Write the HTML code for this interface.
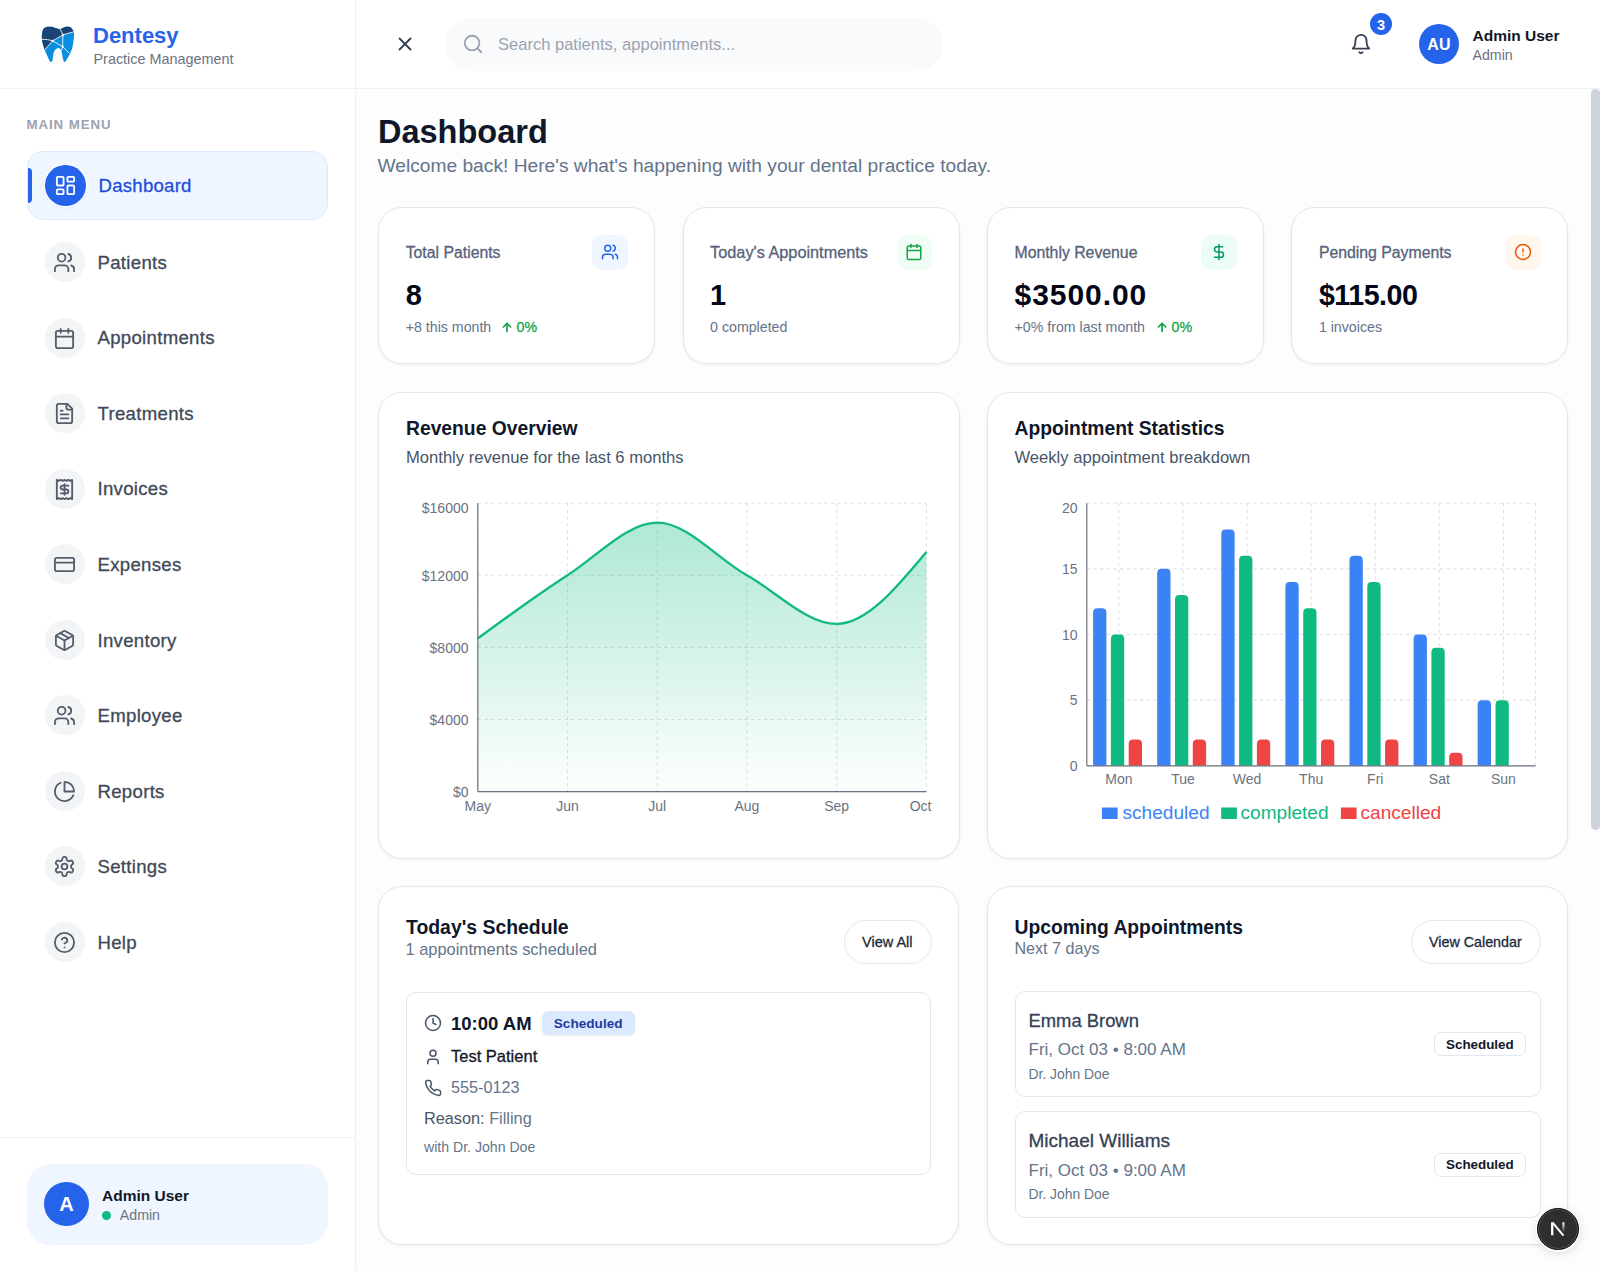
<!DOCTYPE html><html><head><meta charset="utf-8"><title>Dentesy Dashboard</title><style>
html,body{margin:0;padding:0;}
body{width:1600px;height:1271px;overflow:hidden;position:relative;background:#fdfdfe;font-family:"Liberation Sans", sans-serif;}
.t{position:absolute;white-space:nowrap;line-height:1;}
.b{position:absolute;box-sizing:border-box;}
.i{position:absolute;overflow:visible;}
svg text{font-family:"Liberation Sans", sans-serif;}
</style></head><body>
<div class="b" style="left:0.00px;top:0.00px;width:356.00px;height:1271.00px;background:#ffffff;border-right:1px solid #eef0f3;"></div>
<div class="b" style="left:0.00px;top:88.00px;width:355.00px;height:1.00px;background:#eef0f3;"></div>
<div class="b" style="left:0.00px;top:1137.00px;width:355.00px;height:1.00px;background:#eef0f3;"></div>
<svg class="i" style="left:38px;top:22px;width:40px;height:44px" viewBox="0 0 40 44">
<defs><clipPath id="tc"><path d="M6.93 28.40 C7.85 30.59 10.42 36.51 11.43 38.44 C12.44 40.38 12.47 40.03 12.99 40.00 C13.51 39.97 14.17 39.45 14.55 38.27 C14.92 37.09 14.89 34.55 15.24 32.90 C15.58 31.26 15.87 29.52 16.62 28.40 C17.37 27.27 18.76 26.32 19.74 26.15 C20.72 25.97 21.82 26.52 22.51 27.36 C23.20 28.20 23.43 29.38 23.90 31.17 C24.36 32.96 24.82 36.64 25.28 38.10 C25.74 39.55 26.15 39.90 26.67 39.90 C27.19 39.90 27.47 39.55 28.40 38.10 C29.32 36.64 31.17 33.48 32.21 31.17 C33.25 28.86 34.00 27.13 34.63 24.24 C35.27 21.36 35.84 16.28 36.02 13.85 C36.19 11.43 36.13 11.02 35.67 9.70 C35.21 8.37 34.17 6.70 33.25 5.89 C32.32 5.08 31.28 4.96 30.13 4.85 C28.98 4.73 27.65 4.82 26.32 5.19 C24.99 5.57 23.55 6.93 22.16 7.10 C20.78 7.27 19.39 6.61 18.01 6.23 C16.62 5.86 15.24 5.08 13.85 4.85 C12.47 4.62 11.08 4.50 9.70 4.85 C8.31 5.19 6.46 5.83 5.54 6.93 C4.62 8.02 4.44 9.99 4.16 11.43 C3.87 12.87 3.75 14.03 3.81 15.58 C3.87 17.14 4.16 19.16 4.50 20.78 C4.85 22.40 5.48 24.01 5.89 25.28 C6.29 26.55 6.00 26.20 6.93 28.40 Z"/></clipPath></defs>
<g clip-path="url(#tc)">
<rect x="0" y="0" width="40" height="44" fill="#0a8fdf"/>
<path d="M0 0 H40 V9.4 L36 9.5 L24.9 12.9 L14.6 18.9 L6.5 28 L0 30 Z" fill="#1c4474"/>
<g stroke="#ffffff" stroke-width="0.9" fill="none" opacity="0.95">
<path d="M6.5 28.2 L14.6 18.9 L24.9 12.9 L36.5 9.5"/>
<path d="M3 17.3 C8 17.3 11.5 17.8 14.6 18.9"/>
<path d="M24.9 12.9 L22.2 7.2"/>
<path d="M14.6 18.9 L24.6 24.5 L31.5 31.5"/>
<path d="M24.9 12.9 L24.6 24.5 L23.5 28.5"/>
</g>
<circle cx="14.6" cy="18.9" r="1.1" fill="#fff"/><circle cx="24.9" cy="12.9" r="1.1" fill="#fff"/><circle cx="24.6" cy="24.5" r="1.1" fill="#fff"/>
</g></svg>
<svg class="i" style="left:0;top:0;width:1px;height:1px"><text x="93.00" y="43.20" font-size="22" font-weight="700" fill="#2563eb" text-anchor="start" style="">Dentesy</text></svg>
<svg class="i" style="left:0;top:0;width:1px;height:1px"><text x="93.50" y="64.30" font-size="14.4" font-weight="400" fill="#6b7280" text-anchor="start" style="">Practice Management</text></svg>
<svg class="i" style="left:0;top:0;width:1px;height:1px"><text x="26.50" y="128.75" font-size="13.3" font-weight="700" fill="#9ca3af" text-anchor="start" style="letter-spacing:0.9px;">MAIN MENU</text></svg>
<div class="b" style="left:27.00px;top:151.00px;width:301.00px;height:69.00px;background:#eff6ff;border:1px solid #dbeafe;border-radius:16px;"></div>
<div class="b" style="left:27.50px;top:168.00px;width:4.50px;height:35.00px;background:#2563eb;border-radius:0 4px 4px 0;"></div>
<div class="b" style="left:45.30px;top:165.00px;width:40.50px;height:40.50px;background:#2563eb;border-radius:50%;box-shadow:0 0 0 1.5px #ffffff, 0 1px 3px rgba(37,99,235,0.25);"></div>
<svg class="i" style="left:54.40px;top:174.10px;width:23px;height:23px;" viewBox="0 0 24 24" fill="none" stroke="#ffffff" stroke-width="1.9" stroke-linecap="round" stroke-linejoin="round"><rect width="7" height="9" x="3" y="3" rx="1"/><rect width="7" height="5" x="14" y="3" rx="1"/><rect width="7" height="9" x="14" y="12" rx="1"/><rect width="7" height="5" x="3" y="16" rx="1"/></svg>
<svg class="i" style="left:0;top:0;width:1px;height:1px"><text x="98.50" y="192.20" font-size="18.6" font-weight="400" fill="#1d4ed8" text-anchor="start" style="stroke:#1d4ed8;stroke-width:0.3px;letter-spacing:0.25px;">Dashboard</text></svg>
<div class="b" style="left:44.60px;top:242.00px;width:40.00px;height:40.00px;background:#f3f4f6;border-radius:50%;"></div>
<svg class="i" style="left:53.40px;top:251.00px;width:23px;height:23px;" viewBox="0 0 24 24" fill="none" stroke="#535d6c" stroke-width="1.9" stroke-linecap="round" stroke-linejoin="round"><path d="M16 21v-2a4 4 0 0 0-4-4H6a4 4 0 0 0-4 4v2"/><circle cx="9" cy="7" r="4"/><path d="M22 21v-2a4 4 0 0 0-3-3.87"/><path d="M16 3.13a4 4 0 0 1 0 7.75"/></svg>
<svg class="i" style="left:0;top:0;width:1px;height:1px"><text x="97.50" y="268.70" font-size="18.6" font-weight="400" fill="#3f4958" text-anchor="start" style="stroke:#3f4958;stroke-width:0.3px;letter-spacing:0.3px;">Patients</text></svg>
<div class="b" style="left:44.60px;top:317.56px;width:40.00px;height:40.00px;background:#f3f4f6;border-radius:50%;"></div>
<svg class="i" style="left:53.40px;top:326.56px;width:23px;height:23px;" viewBox="0 0 24 24" fill="none" stroke="#535d6c" stroke-width="1.9" stroke-linecap="round" stroke-linejoin="round"><path d="M8 2v4"/><path d="M16 2v4"/><rect width="18" height="18" x="3" y="4" rx="2"/><path d="M3 10h18"/></svg>
<svg class="i" style="left:0;top:0;width:1px;height:1px"><text x="97.50" y="344.26" font-size="18.6" font-weight="400" fill="#3f4958" text-anchor="start" style="stroke:#3f4958;stroke-width:0.3px;letter-spacing:0.3px;">Appointments</text></svg>
<div class="b" style="left:44.60px;top:393.12px;width:40.00px;height:40.00px;background:#f3f4f6;border-radius:50%;"></div>
<svg class="i" style="left:53.40px;top:402.12px;width:23px;height:23px;" viewBox="0 0 24 24" fill="none" stroke="#535d6c" stroke-width="1.9" stroke-linecap="round" stroke-linejoin="round"><path d="M15 2H6a2 2 0 0 0-2 2v16a2 2 0 0 0 2 2h12a2 2 0 0 0 2-2V7Z"/><path d="M14 2v4a2 2 0 0 0 2 2h4"/><path d="M10 9H8"/><path d="M16 13H8"/><path d="M16 17H8"/></svg>
<svg class="i" style="left:0;top:0;width:1px;height:1px"><text x="97.50" y="419.82" font-size="18.6" font-weight="400" fill="#3f4958" text-anchor="start" style="stroke:#3f4958;stroke-width:0.3px;letter-spacing:0.3px;">Treatments</text></svg>
<div class="b" style="left:44.60px;top:468.68px;width:40.00px;height:40.00px;background:#f3f4f6;border-radius:50%;"></div>
<svg class="i" style="left:53.40px;top:477.68px;width:23px;height:23px;" viewBox="0 0 24 24" fill="none" stroke="#535d6c" stroke-width="1.9" stroke-linecap="round" stroke-linejoin="round"><path d="M4 2v20l2-1 2 1 2-1 2 1 2-1 2 1 2-1 2 1V2l-2 1-2-1-2 1-2-1-2 1-2-1-2 1Z"/><path d="M16 8h-6a2 2 0 1 0 0 4h4a2 2 0 1 1 0 4H8"/><path d="M12 17.5v-11"/></svg>
<svg class="i" style="left:0;top:0;width:1px;height:1px"><text x="97.50" y="495.38" font-size="18.6" font-weight="400" fill="#3f4958" text-anchor="start" style="stroke:#3f4958;stroke-width:0.3px;letter-spacing:0.3px;">Invoices</text></svg>
<div class="b" style="left:44.60px;top:544.24px;width:40.00px;height:40.00px;background:#f3f4f6;border-radius:50%;"></div>
<svg class="i" style="left:53.40px;top:553.24px;width:23px;height:23px;" viewBox="0 0 24 24" fill="none" stroke="#535d6c" stroke-width="1.9" stroke-linecap="round" stroke-linejoin="round"><rect width="20" height="14" x="2" y="5" rx="2"/><line x1="2" x2="22" y1="10" y2="10"/></svg>
<svg class="i" style="left:0;top:0;width:1px;height:1px"><text x="97.50" y="570.94" font-size="18.6" font-weight="400" fill="#3f4958" text-anchor="start" style="stroke:#3f4958;stroke-width:0.3px;letter-spacing:0.3px;">Expenses</text></svg>
<div class="b" style="left:44.60px;top:619.80px;width:40.00px;height:40.00px;background:#f3f4f6;border-radius:50%;"></div>
<svg class="i" style="left:53.40px;top:628.80px;width:23px;height:23px;" viewBox="0 0 24 24" fill="none" stroke="#535d6c" stroke-width="1.9" stroke-linecap="round" stroke-linejoin="round"><path d="m7.5 4.27 9 5.15"/><path d="M21 8a2 2 0 0 0-1-1.73l-7-4a2 2 0 0 0-2 0l-7 4A2 2 0 0 0 3 8v8a2 2 0 0 0 1 1.73l7 4a2 2 0 0 0 2 0l7-4A2 2 0 0 0 21 16Z"/><path d="m3.3 7 8.7 5 8.7-5"/><path d="M12 22V12"/></svg>
<svg class="i" style="left:0;top:0;width:1px;height:1px"><text x="97.50" y="646.50" font-size="18.6" font-weight="400" fill="#3f4958" text-anchor="start" style="stroke:#3f4958;stroke-width:0.3px;letter-spacing:0.3px;">Inventory</text></svg>
<div class="b" style="left:44.60px;top:695.36px;width:40.00px;height:40.00px;background:#f3f4f6;border-radius:50%;"></div>
<svg class="i" style="left:53.40px;top:704.36px;width:23px;height:23px;" viewBox="0 0 24 24" fill="none" stroke="#535d6c" stroke-width="1.9" stroke-linecap="round" stroke-linejoin="round"><path d="M16 21v-2a4 4 0 0 0-4-4H6a4 4 0 0 0-4 4v2"/><circle cx="9" cy="7" r="4"/><path d="M22 21v-2a4 4 0 0 0-3-3.87"/><path d="M16 3.13a4 4 0 0 1 0 7.75"/></svg>
<svg class="i" style="left:0;top:0;width:1px;height:1px"><text x="97.50" y="722.06" font-size="18.6" font-weight="400" fill="#3f4958" text-anchor="start" style="stroke:#3f4958;stroke-width:0.3px;letter-spacing:0.3px;">Employee</text></svg>
<div class="b" style="left:44.60px;top:770.92px;width:40.00px;height:40.00px;background:#f3f4f6;border-radius:50%;"></div>
<svg class="i" style="left:53.40px;top:779.92px;width:23px;height:23px;" viewBox="0 0 24 24" fill="none" stroke="#535d6c" stroke-width="1.9" stroke-linecap="round" stroke-linejoin="round"><path d="M21.21 15.89A10 10 0 1 1 8 2.83"/><path d="M22 12A10 10 0 0 0 12 2v10z"/></svg>
<svg class="i" style="left:0;top:0;width:1px;height:1px"><text x="97.50" y="797.62" font-size="18.6" font-weight="400" fill="#3f4958" text-anchor="start" style="stroke:#3f4958;stroke-width:0.3px;letter-spacing:0.3px;">Reports</text></svg>
<div class="b" style="left:44.60px;top:846.48px;width:40.00px;height:40.00px;background:#f3f4f6;border-radius:50%;"></div>
<svg class="i" style="left:53.40px;top:855.48px;width:23px;height:23px;" viewBox="0 0 24 24" fill="none" stroke="#535d6c" stroke-width="1.9" stroke-linecap="round" stroke-linejoin="round"><path d="M12.22 2h-.44a2 2 0 0 0-2 2v.18a2 2 0 0 1-1 1.73l-.43.25a2 2 0 0 1-2 0l-.15-.08a2 2 0 0 0-2.73.73l-.22.38a2 2 0 0 0 .73 2.73l.15.1a2 2 0 0 1 1 1.72v.51a2 2 0 0 1-1 1.74l-.15.09a2 2 0 0 0-.73 2.73l.22.38a2 2 0 0 0 2.73.73l.15-.08a2 2 0 0 1 2 0l.43.25a2 2 0 0 1 1 1.73V20a2 2 0 0 0 2 2h.44a2 2 0 0 0 2-2v-.18a2 2 0 0 1 1-1.73l.43-.25a2 2 0 0 1 2 0l.15.08a2 2 0 0 0 2.73-.73l.22-.39a2 2 0 0 0-.73-2.73l-.15-.08a2 2 0 0 1-1-1.74v-.5a2 2 0 0 1 1-1.74l.15-.09a2 2 0 0 0 .73-2.73l-.22-.38a2 2 0 0 0-2.73-.73l-.15.08a2 2 0 0 1-2 0l-.43-.25a2 2 0 0 1-1-1.73V4a2 2 0 0 0-2-2z"/><circle cx="12" cy="12" r="3"/></svg>
<svg class="i" style="left:0;top:0;width:1px;height:1px"><text x="97.50" y="873.18" font-size="18.6" font-weight="400" fill="#3f4958" text-anchor="start" style="stroke:#3f4958;stroke-width:0.3px;letter-spacing:0.3px;">Settings</text></svg>
<div class="b" style="left:44.60px;top:922.04px;width:40.00px;height:40.00px;background:#f3f4f6;border-radius:50%;"></div>
<svg class="i" style="left:53.40px;top:931.04px;width:23px;height:23px;" viewBox="0 0 24 24" fill="none" stroke="#535d6c" stroke-width="1.9" stroke-linecap="round" stroke-linejoin="round"><circle cx="12" cy="12" r="10"/><path d="M9.09 9a3 3 0 0 1 5.83 1c0 2-3 3-3 3"/><path d="M12 17h.01"/></svg>
<svg class="i" style="left:0;top:0;width:1px;height:1px"><text x="97.50" y="948.74" font-size="18.6" font-weight="400" fill="#3f4958" text-anchor="start" style="stroke:#3f4958;stroke-width:0.3px;letter-spacing:0.3px;">Help</text></svg>
<div class="b" style="left:26.50px;top:1164.00px;width:301.50px;height:80.50px;background:#eff6ff;border-radius:24px;"></div>
<div class="b" style="left:44.40px;top:1182.00px;width:44.40px;height:44.40px;background:#2563eb;border-radius:50%;"></div>
<svg class="i" style="left:0;top:0;width:1px;height:1px"><text x="66.60" y="1211.30" font-size="20" font-weight="700" fill="#ffffff" text-anchor="middle" style="">A</text></svg>
<svg class="i" style="left:0;top:0;width:1px;height:1px"><text x="102.00" y="1201.00" font-size="15.5" font-weight="700" fill="#111827" text-anchor="start" style="">Admin User</text></svg>
<div class="b" style="left:102.00px;top:1211.00px;width:9.40px;height:9.40px;background:#10b981;border-radius:50%;"></div>
<svg class="i" style="left:0;top:0;width:1px;height:1px"><text x="119.80" y="1219.75" font-size="14.2" font-weight="400" fill="#6b7280" text-anchor="start" style="">Admin</text></svg>
<div class="b" style="left:356.00px;top:0.00px;width:1244.00px;height:89.00px;background:#ffffff;border-bottom:1px solid #eef0f3;"></div>
<svg class="i" style="left:393.50px;top:33.40px;width:22px;height:22px;" viewBox="0 0 24 24" fill="none" stroke="#334155" stroke-width="2" stroke-linecap="round" stroke-linejoin="round"><path d="M18 6 6 18"/><path d="m6 6 12 12"/></svg>
<div class="b" style="left:444.50px;top:17.80px;width:498.00px;height:53.20px;background:#f8fafc;border-radius:27px;"></div>
<svg class="i" style="left:462.30px;top:33.30px;width:22px;height:22px;" viewBox="0 0 24 24" fill="none" stroke="#9ca3af" stroke-width="2" stroke-linecap="round" stroke-linejoin="round"><circle cx="11" cy="11" r="8"/><path d="m21 21-4.3-4.3"/></svg>
<svg class="i" style="left:0;top:0;width:1px;height:1px"><text x="498.00" y="50.00" font-size="16.55" font-weight="400" fill="#9ca3af" text-anchor="start" style="">Search patients, appointments...</text></svg>
<svg class="i" style="left:1350.10px;top:33.20px;width:22px;height:22px;" viewBox="0 0 24 24" fill="none" stroke="#374151" stroke-width="2" stroke-linecap="round" stroke-linejoin="round"><path d="M6 8a6 6 0 0 1 12 0c0 7 3 9 3 9H3s3-2 3-9"/><path d="M10.3 21a1.94 1.94 0 0 0 3.4 0"/></svg>
<div class="b" style="left:1370.00px;top:13.10px;width:22.20px;height:22.20px;background:#2563eb;border-radius:50%;"></div>
<svg class="i" style="left:0;top:0;width:1px;height:1px"><text x="1381.10" y="29.60" font-size="14.5" font-weight="700" fill="#ffffff" text-anchor="middle" style="">3</text></svg>
<div class="b" style="left:1418.90px;top:24.20px;width:40.00px;height:40.00px;background:#2563eb;border-radius:50%;"></div>
<svg class="i" style="left:0;top:0;width:1px;height:1px"><text x="1438.90" y="49.80" font-size="16" font-weight="700" fill="#ffffff" text-anchor="middle" style="">AU</text></svg>
<svg class="i" style="left:0;top:0;width:1px;height:1px"><text x="1472.50" y="41.00" font-size="15.5" font-weight="700" fill="#111827" text-anchor="start" style="">Admin User</text></svg>
<svg class="i" style="left:0;top:0;width:1px;height:1px"><text x="1472.50" y="59.75" font-size="14.2" font-weight="400" fill="#6b7280" text-anchor="start" style="">Admin</text></svg>
<svg class="i" style="left:0;top:0;width:1px;height:1px"><text x="378.00" y="142.90" font-size="32.5" font-weight="700" fill="#0f172a" text-anchor="start" style="">Dashboard</text></svg>
<svg class="i" style="left:0;top:0;width:1px;height:1px"><text x="377.50" y="171.90" font-size="19.2" font-weight="400" fill="#64748b" text-anchor="start" style="">Welcome back! Here's what's happening with your dental practice today.</text></svg>
<div class="b" style="left:378.20px;top:207.00px;width:277.00px;height:156.50px;background:#ffffff;border:1.3px solid #e2e8f0;border-radius:24px;box-shadow:0 1px 3px rgba(15,23,42,0.06);"></div>
<svg class="i" style="left:0;top:0;width:1px;height:1px"><text x="405.70" y="257.80" font-size="15.8" font-weight="400" fill="#56637a" text-anchor="start" style="stroke:#56637a;stroke-width:0.3px;">Total Patients</text></svg>
<div class="b" style="left:592.20px;top:234.50px;width:35.50px;height:35.50px;background:#eff6ff;border-radius:10px;"></div>
<svg class="i" style="left:600.95px;top:243.20px;width:18px;height:18px;" viewBox="0 0 24 24" fill="none" stroke="#2563eb" stroke-width="2" stroke-linecap="round" stroke-linejoin="round"><path d="M16 21v-2a4 4 0 0 0-4-4H6a4 4 0 0 0-4 4v2"/><circle cx="9" cy="7" r="4"/><path d="M22 21v-2a4 4 0 0 0-3-3.87"/><path d="M16 3.13a4 4 0 0 1 0 7.75"/></svg>
<svg class="i" style="left:0;top:0;width:1px;height:1px"><text x="405.70" y="305.40" font-size="29" font-weight="700" fill="#020617" text-anchor="start" style="letter-spacing:0px;">8</text></svg>
<svg class="i" style="left:0;top:0;width:1px;height:1px"><text x="405.70" y="332.20" font-size="14.2" font-weight="400" fill="#64748b" text-anchor="start" style="">+8 this month</text></svg>
<div class="b" style="left:682.60px;top:207.00px;width:277.00px;height:156.50px;background:#ffffff;border:1.3px solid #e2e8f0;border-radius:24px;box-shadow:0 1px 3px rgba(15,23,42,0.06);"></div>
<svg class="i" style="left:0;top:0;width:1px;height:1px"><text x="710.10" y="257.80" font-size="16.3" font-weight="400" fill="#56637a" text-anchor="start" style="stroke:#56637a;stroke-width:0.3px;">Today's Appointments</text></svg>
<div class="b" style="left:896.60px;top:234.50px;width:35.50px;height:35.50px;background:#f0fdf4;border-radius:10px;"></div>
<svg class="i" style="left:905.35px;top:243.20px;width:18px;height:18px;" viewBox="0 0 24 24" fill="none" stroke="#16a34a" stroke-width="2" stroke-linecap="round" stroke-linejoin="round"><path d="M8 2v4"/><path d="M16 2v4"/><rect width="18" height="18" x="3" y="4" rx="2"/><path d="M3 10h18"/></svg>
<svg class="i" style="left:0;top:0;width:1px;height:1px"><text x="710.10" y="305.40" font-size="29" font-weight="700" fill="#020617" text-anchor="start" style="letter-spacing:0px;">1</text></svg>
<svg class="i" style="left:0;top:0;width:1px;height:1px"><text x="710.10" y="332.20" font-size="14.2" font-weight="400" fill="#64748b" text-anchor="start" style="">0 completed</text></svg>
<div class="b" style="left:987.00px;top:207.00px;width:277.00px;height:156.50px;background:#ffffff;border:1.3px solid #e2e8f0;border-radius:24px;box-shadow:0 1px 3px rgba(15,23,42,0.06);"></div>
<svg class="i" style="left:0;top:0;width:1px;height:1px"><text x="1014.50" y="257.80" font-size="15.8" font-weight="400" fill="#56637a" text-anchor="start" style="stroke:#56637a;stroke-width:0.3px;">Monthly Revenue</text></svg>
<div class="b" style="left:1201.00px;top:234.50px;width:35.50px;height:35.50px;background:#ecfdf5;border-radius:10px;"></div>
<svg class="i" style="left:1209.75px;top:243.20px;width:18px;height:18px;" viewBox="0 0 24 24" fill="none" stroke="#059669" stroke-width="2" stroke-linecap="round" stroke-linejoin="round"><line x1="12" x2="12" y1="2" y2="22"/><path d="M17 5H9.5a3.5 3.5 0 0 0 0 7h5a3.5 3.5 0 0 1 0 7H6"/></svg>
<svg class="i" style="left:0;top:0;width:1px;height:1px"><text x="1014.50" y="305.40" font-size="30" font-weight="700" fill="#020617" text-anchor="start" style="letter-spacing:0.95px;">$3500.00</text></svg>
<svg class="i" style="left:0;top:0;width:1px;height:1px"><text x="1014.50" y="332.20" font-size="14.2" font-weight="400" fill="#64748b" text-anchor="start" style="">+0% from last month</text></svg>
<div class="b" style="left:1291.40px;top:207.00px;width:277.00px;height:156.50px;background:#ffffff;border:1.3px solid #e2e8f0;border-radius:24px;box-shadow:0 1px 3px rgba(15,23,42,0.06);"></div>
<svg class="i" style="left:0;top:0;width:1px;height:1px"><text x="1318.90" y="257.80" font-size="15.8" font-weight="400" fill="#56637a" text-anchor="start" style="stroke:#56637a;stroke-width:0.3px;">Pending Payments</text></svg>
<div class="b" style="left:1505.40px;top:234.50px;width:35.50px;height:35.50px;background:#fff7ed;border-radius:10px;"></div>
<svg class="i" style="left:1514.15px;top:243.20px;width:18px;height:18px;" viewBox="0 0 24 24" fill="none" stroke="#ea580c" stroke-width="2" stroke-linecap="round" stroke-linejoin="round"><circle cx="12" cy="12" r="10"/><line x1="12" x2="12" y1="8" y2="12"/><line x1="12" x2="12.01" y1="16" y2="16"/></svg>
<svg class="i" style="left:0;top:0;width:1px;height:1px"><text x="1318.90" y="305.40" font-size="28.6" font-weight="700" fill="#020617" text-anchor="start" style="letter-spacing:-0.45px;">$115.00</text></svg>
<svg class="i" style="left:0;top:0;width:1px;height:1px"><text x="1318.90" y="332.20" font-size="14.2" font-weight="400" fill="#64748b" text-anchor="start" style="">1 invoices</text></svg>
<svg class="i" style="left:0;top:0;width:1px;height:1px"><path d="M507.0,331.4V323.4M503.4,327L507.0,323.3L510.6,327" fill="none" stroke="#16a34a" stroke-width="1.7" stroke-linecap="round" stroke-linejoin="round"/></svg>
<svg class="i" style="left:0;top:0;width:1px;height:1px"><text x="516.50" y="332.20" font-size="14.2" font-weight="400" fill="#16a34a" text-anchor="start" style="stroke:#16a34a;stroke-width:0.3px;">0%</text></svg>
<svg class="i" style="left:0;top:0;width:1px;height:1px"><path d="M1162.1,331.4V323.4M1158.5,327L1162.1,323.3L1165.6999999999998,327" fill="none" stroke="#16a34a" stroke-width="1.7" stroke-linecap="round" stroke-linejoin="round"/></svg>
<svg class="i" style="left:0;top:0;width:1px;height:1px"><text x="1171.60" y="332.20" font-size="14.2" font-weight="400" fill="#16a34a" text-anchor="start" style="stroke:#16a34a;stroke-width:0.3px;">0%</text></svg>
<div class="b" style="left:378.20px;top:391.60px;width:581.40px;height:467.20px;background:#ffffff;border:1.3px solid #e2e8f0;border-radius:24px;box-shadow:0 1px 3px rgba(15,23,42,0.06);"></div>
<div class="b" style="left:987.00px;top:391.60px;width:581.20px;height:467.20px;background:#ffffff;border:1.3px solid #e2e8f0;border-radius:24px;box-shadow:0 1px 3px rgba(15,23,42,0.06);"></div>
<svg class="i" style="left:0;top:0;width:1px;height:1px"><text x="406.00" y="435.10" font-size="19.3" font-weight="700" fill="#0f172a" text-anchor="start" style="">Revenue Overview</text></svg>
<svg class="i" style="left:0;top:0;width:1px;height:1px"><text x="406.00" y="462.70" font-size="16.6" font-weight="400" fill="#475569" text-anchor="start" style="">Monthly revenue for the last 6 months</text></svg>
<svg class="i" style="left:0;top:0;width:1px;height:1px"><text x="1014.50" y="435.10" font-size="19.3" font-weight="700" fill="#0f172a" text-anchor="start" style="">Appointment Statistics</text></svg>
<svg class="i" style="left:0;top:0;width:1px;height:1px"><text x="1014.50" y="462.70" font-size="16.6" font-weight="400" fill="#475569" text-anchor="start" style="">Weekly appointment breakdown</text></svg>
<svg class="i" style="left:0;top:0;width:1600px;height:1271px" viewBox="0 0 1600 1271"><defs><linearGradient id="rg" x1="0" y1="0" x2="0" y2="1"><stop offset="5%" stop-color="#10b981" stop-opacity="0.32"/><stop offset="95%" stop-color="#10b981" stop-opacity="0.02"/></linearGradient></defs><line x1="477.8" x2="926.4" y1="503.20" y2="503.20" stroke="#dde1e7" stroke-width="1.1" stroke-dasharray="3.33 3.33"/><line x1="477.8" x2="926.4" y1="575.30" y2="575.30" stroke="#dde1e7" stroke-width="1.1" stroke-dasharray="3.33 3.33"/><line x1="477.8" x2="926.4" y1="647.40" y2="647.40" stroke="#dde1e7" stroke-width="1.1" stroke-dasharray="3.33 3.33"/><line x1="477.8" x2="926.4" y1="719.50" y2="719.50" stroke="#dde1e7" stroke-width="1.1" stroke-dasharray="3.33 3.33"/><line x1="477.8" x2="926.4" y1="791.60" y2="791.60" stroke="#dde1e7" stroke-width="1.1" stroke-dasharray="3.33 3.33"/><line x1="477.80" x2="477.80" y1="503.2" y2="791.6" stroke="#dde1e7" stroke-width="1.1" stroke-dasharray="3.33 3.33"/><line x1="567.52" x2="567.52" y1="503.2" y2="791.6" stroke="#dde1e7" stroke-width="1.1" stroke-dasharray="3.33 3.33"/><line x1="657.24" x2="657.24" y1="503.2" y2="791.6" stroke="#dde1e7" stroke-width="1.1" stroke-dasharray="3.33 3.33"/><line x1="746.96" x2="746.96" y1="503.2" y2="791.6" stroke="#dde1e7" stroke-width="1.1" stroke-dasharray="3.33 3.33"/><line x1="836.68" x2="836.68" y1="503.2" y2="791.6" stroke="#dde1e7" stroke-width="1.1" stroke-dasharray="3.33 3.33"/><line x1="926.40" x2="926.40" y1="503.2" y2="791.6" stroke="#dde1e7" stroke-width="1.1" stroke-dasharray="3.33 3.33"/><path d="M477.80,638.39C507.71,616.49 537.61,594.59 567.52,575.30C597.43,556.01 627.33,522.67 657.24,522.67C687.15,522.67 717.05,558.42 746.96,575.30C776.87,592.18 806.77,623.97 836.68,623.97C866.59,623.97 896.49,587.92 926.40,551.87L926.40,791.60L477.80,791.60Z" fill="url(#rg)"/><path d="M477.80,638.39C507.71,616.49 537.61,594.59 567.52,575.30C597.43,556.01 627.33,522.67 657.24,522.67C687.15,522.67 717.05,558.42 746.96,575.30C776.87,592.18 806.77,623.97 836.68,623.97C866.59,623.97 896.49,587.92 926.40,551.87" fill="none" stroke="#10b981" stroke-width="2.3"/><line x1="477.8" x2="477.8" y1="503.2" y2="791.6" stroke="#6b7280" stroke-width="1.2"/><line x1="477.8" x2="926.4" y1="791.6" y2="791.6" stroke="#6b7280" stroke-width="1.2"/><text x="468.5" y="512.60" text-anchor="end" font-size="14" fill="#6b7280">$16000</text><text x="468.5" y="580.60" text-anchor="end" font-size="14" fill="#6b7280">$12000</text><text x="468.5" y="652.70" text-anchor="end" font-size="14" fill="#6b7280">$8000</text><text x="468.5" y="724.80" text-anchor="end" font-size="14" fill="#6b7280">$4000</text><text x="468.5" y="796.80" text-anchor="end" font-size="14" fill="#6b7280">$0</text><text x="477.80" y="810.5" text-anchor="middle" font-size="14" fill="#6b7280">May</text><text x="567.52" y="810.5" text-anchor="middle" font-size="14" fill="#6b7280">Jun</text><text x="657.24" y="810.5" text-anchor="middle" font-size="14" fill="#6b7280">Jul</text><text x="746.96" y="810.5" text-anchor="middle" font-size="14" fill="#6b7280">Aug</text><text x="836.68" y="810.5" text-anchor="middle" font-size="14" fill="#6b7280">Sep</text><text x="920.60" y="810.5" text-anchor="middle" font-size="14" fill="#6b7280">Oct</text><line x1="1086.8" x2="1535.5" y1="503.20" y2="503.20" stroke="#dde1e7" stroke-width="1.1" stroke-dasharray="3.33 3.33"/><line x1="1086.8" x2="1535.5" y1="568.85" y2="568.85" stroke="#dde1e7" stroke-width="1.1" stroke-dasharray="3.33 3.33"/><line x1="1086.8" x2="1535.5" y1="634.50" y2="634.50" stroke="#dde1e7" stroke-width="1.1" stroke-dasharray="3.33 3.33"/><line x1="1086.8" x2="1535.5" y1="700.15" y2="700.15" stroke="#dde1e7" stroke-width="1.1" stroke-dasharray="3.33 3.33"/><line x1="1086.8" x2="1535.5" y1="765.80" y2="765.80" stroke="#dde1e7" stroke-width="1.1" stroke-dasharray="3.33 3.33"/><line x1="1118.85" x2="1118.85" y1="503.2" y2="765.8" stroke="#dde1e7" stroke-width="1.1" stroke-dasharray="3.33 3.33"/><line x1="1182.95" x2="1182.95" y1="503.2" y2="765.8" stroke="#dde1e7" stroke-width="1.1" stroke-dasharray="3.33 3.33"/><line x1="1247.05" x2="1247.05" y1="503.2" y2="765.8" stroke="#dde1e7" stroke-width="1.1" stroke-dasharray="3.33 3.33"/><line x1="1311.15" x2="1311.15" y1="503.2" y2="765.8" stroke="#dde1e7" stroke-width="1.1" stroke-dasharray="3.33 3.33"/><line x1="1375.25" x2="1375.25" y1="503.2" y2="765.8" stroke="#dde1e7" stroke-width="1.1" stroke-dasharray="3.33 3.33"/><line x1="1439.35" x2="1439.35" y1="503.2" y2="765.8" stroke="#dde1e7" stroke-width="1.1" stroke-dasharray="3.33 3.33"/><line x1="1503.45" x2="1503.45" y1="503.2" y2="765.8" stroke="#dde1e7" stroke-width="1.1" stroke-dasharray="3.33 3.33"/><line x1="1535.5" x2="1535.5" y1="503.2" y2="765.8" stroke="#dde1e7" stroke-width="1.1" stroke-dasharray="3.33 3.33"/><path d="M1093.10,765.80V612.64Q1093.10,608.24 1097.50,608.24H1102.00Q1106.40,608.24 1106.40,612.64V765.80Z" fill="#3b82f6"/><path d="M1110.90,765.80V638.90Q1110.90,634.50 1115.30,634.50H1119.80Q1124.20,634.50 1124.20,638.90V765.80Z" fill="#10b981"/><path d="M1128.70,765.80V743.94Q1128.70,739.54 1133.10,739.54H1137.60Q1142.00,739.54 1142.00,743.94V765.80Z" fill="#ef4444"/><path d="M1157.20,765.80V573.25Q1157.20,568.85 1161.60,568.85H1166.10Q1170.50,568.85 1170.50,573.25V765.80Z" fill="#3b82f6"/><path d="M1175.00,765.80V599.51Q1175.00,595.11 1179.40,595.11H1183.90Q1188.30,595.11 1188.30,599.51V765.80Z" fill="#10b981"/><path d="M1192.80,765.80V743.94Q1192.80,739.54 1197.20,739.54H1201.70Q1206.10,739.54 1206.10,743.94V765.80Z" fill="#ef4444"/><path d="M1221.30,765.80V533.86Q1221.30,529.46 1225.70,529.46H1230.20Q1234.60,529.46 1234.60,533.86V765.80Z" fill="#3b82f6"/><path d="M1239.10,765.80V560.12Q1239.10,555.72 1243.50,555.72H1248.00Q1252.40,555.72 1252.40,560.12V765.80Z" fill="#10b981"/><path d="M1256.90,765.80V743.94Q1256.90,739.54 1261.30,739.54H1265.80Q1270.20,739.54 1270.20,743.94V765.80Z" fill="#ef4444"/><path d="M1285.40,765.80V586.38Q1285.40,581.98 1289.80,581.98H1294.30Q1298.70,581.98 1298.70,586.38V765.80Z" fill="#3b82f6"/><path d="M1303.20,765.80V612.64Q1303.20,608.24 1307.60,608.24H1312.10Q1316.50,608.24 1316.50,612.64V765.80Z" fill="#10b981"/><path d="M1321.00,765.80V743.94Q1321.00,739.54 1325.40,739.54H1329.90Q1334.30,739.54 1334.30,743.94V765.80Z" fill="#ef4444"/><path d="M1349.50,765.80V560.12Q1349.50,555.72 1353.90,555.72H1358.40Q1362.80,555.72 1362.80,560.12V765.80Z" fill="#3b82f6"/><path d="M1367.30,765.80V586.38Q1367.30,581.98 1371.70,581.98H1376.20Q1380.60,581.98 1380.60,586.38V765.80Z" fill="#10b981"/><path d="M1385.10,765.80V743.94Q1385.10,739.54 1389.50,739.54H1394.00Q1398.40,739.54 1398.40,743.94V765.80Z" fill="#ef4444"/><path d="M1413.60,765.80V638.90Q1413.60,634.50 1418.00,634.50H1422.50Q1426.90,634.50 1426.90,638.90V765.80Z" fill="#3b82f6"/><path d="M1431.40,765.80V652.03Q1431.40,647.63 1435.80,647.63H1440.30Q1444.70,647.63 1444.70,652.03V765.80Z" fill="#10b981"/><path d="M1449.20,765.80V757.07Q1449.20,752.67 1453.60,752.67H1458.10Q1462.50,752.67 1462.50,757.07V765.80Z" fill="#ef4444"/><path d="M1477.70,765.80V704.55Q1477.70,700.15 1482.10,700.15H1486.60Q1491.00,700.15 1491.00,704.55V765.80Z" fill="#3b82f6"/><path d="M1495.50,765.80V704.55Q1495.50,700.15 1499.90,700.15H1504.40Q1508.80,700.15 1508.80,704.55V765.80Z" fill="#10b981"/><line x1="1086.8" x2="1086.8" y1="503.2" y2="765.8" stroke="#6b7280" stroke-width="1.2"/><line x1="1086.8" x2="1535.5" y1="765.8" y2="765.8" stroke="#6b7280" stroke-width="1.2"/><text x="1077.5" y="512.80" text-anchor="end" font-size="14" fill="#6b7280">20</text><text x="1077.5" y="574.15" text-anchor="end" font-size="14" fill="#6b7280">15</text><text x="1077.5" y="639.80" text-anchor="end" font-size="14" fill="#6b7280">10</text><text x="1077.5" y="705.45" text-anchor="end" font-size="14" fill="#6b7280">5</text><text x="1077.5" y="771.00" text-anchor="end" font-size="14" fill="#6b7280">0</text><text x="1118.85" y="784" text-anchor="middle" font-size="14" fill="#6b7280">Mon</text><text x="1182.95" y="784" text-anchor="middle" font-size="14" fill="#6b7280">Tue</text><text x="1247.05" y="784" text-anchor="middle" font-size="14" fill="#6b7280">Wed</text><text x="1311.15" y="784" text-anchor="middle" font-size="14" fill="#6b7280">Thu</text><text x="1375.25" y="784" text-anchor="middle" font-size="14" fill="#6b7280">Fri</text><text x="1439.35" y="784" text-anchor="middle" font-size="14" fill="#6b7280">Sat</text><text x="1503.45" y="784" text-anchor="middle" font-size="14" fill="#6b7280">Sun</text><rect x="1101.9" y="807.5" width="15.7" height="11.5" fill="#3b82f6"/><text x="1122.5" y="818.8" font-size="19.1" fill="#3b82f6">scheduled</text><rect x="1221.2" y="807.5" width="15.7" height="11.5" fill="#10b981"/><text x="1240.5" y="818.8" font-size="19.1" fill="#10b981">completed</text><rect x="1340.9" y="807.5" width="15.7" height="11.5" fill="#ef4444"/><text x="1360.5" y="818.8" font-size="19.1" fill="#ef4444">cancelled</text></svg>
<div class="b" style="left:378.20px;top:886.40px;width:580.80px;height:358.60px;background:#ffffff;border:1.3px solid #e2e8f0;border-radius:24px;box-shadow:0 1px 3px rgba(15,23,42,0.06);"></div>
<div class="b" style="left:987.00px;top:886.40px;width:581.40px;height:358.60px;background:#ffffff;border:1.3px solid #e2e8f0;border-radius:24px;box-shadow:0 1px 3px rgba(15,23,42,0.06);"></div>
<svg class="i" style="left:0;top:0;width:1px;height:1px"><text x="406.00" y="934.20" font-size="19.4" font-weight="700" fill="#0f172a" text-anchor="start" style="">Today's Schedule</text></svg>
<svg class="i" style="left:0;top:0;width:1px;height:1px"><text x="405.50" y="954.60" font-size="16.4" font-weight="400" fill="#64748b" text-anchor="start" style="">1 appointments scheduled</text></svg>
<div class="b" style="left:843.50px;top:920.10px;width:88.50px;height:43.80px;background:#ffffff;border:1.3px solid #e2e8f0;border-radius:22px;"></div>
<svg class="i" style="left:0;top:0;width:1px;height:1px"><text x="862.00" y="946.75" font-size="14.5" font-weight="400" fill="#1e293b" text-anchor="start" style="stroke:#1e293b;stroke-width:0.3px;">View All</text></svg>
<div class="b" style="left:406.20px;top:991.50px;width:525.20px;height:183.30px;background:#ffffff;border:1.3px solid #e2e8f0;border-radius:10px;"></div>
<svg class="i" style="left:424.15px;top:1014.15px;width:18px;height:18px;" viewBox="0 0 24 24" fill="none" stroke="#475569" stroke-width="2" stroke-linecap="round" stroke-linejoin="round"><circle cx="12" cy="12" r="10"/><polyline points="12 6 12 12 16 14"/></svg>
<svg class="i" style="left:0;top:0;width:1px;height:1px"><text x="451.00" y="1029.70" font-size="18.5" font-weight="700" fill="#0f172a" text-anchor="start" style="">10:00 AM</text></svg>
<div class="b" style="left:542.20px;top:1011.00px;width:93.10px;height:24.40px;background:#dbeafe;border-radius:6px;box-shadow:0 1px 2px rgba(0,0,0,0.08);"></div>
<svg class="i" style="left:0;top:0;width:1px;height:1px"><text x="553.80" y="1028.00" font-size="13.6" font-weight="700" fill="#1e3a9f" text-anchor="start" style="">Scheduled</text></svg>
<svg class="i" style="left:424.15px;top:1048.00px;width:18px;height:18px;" viewBox="0 0 24 24" fill="none" stroke="#475569" stroke-width="2" stroke-linecap="round" stroke-linejoin="round"><path d="M19 21v-2a4 4 0 0 0-4-4H9a4 4 0 0 0-4 4v2"/><circle cx="12" cy="7" r="4"/></svg>
<svg class="i" style="left:0;top:0;width:1px;height:1px"><text x="451.00" y="1062.20" font-size="16.5" font-weight="400" fill="#0f172a" text-anchor="start" style="stroke:#0f172a;stroke-width:0.3px;">Test Patient</text></svg>
<svg class="i" style="left:424.30px;top:1078.75px;width:18px;height:18px;" viewBox="0 0 24 24" fill="none" stroke="#475569" stroke-width="2" stroke-linecap="round" stroke-linejoin="round"><path d="M22 16.92v3a2 2 0 0 1-2.18 2 19.79 19.79 0 0 1-8.63-3.07 19.5 19.5 0 0 1-6-6 19.79 19.79 0 0 1-3.07-8.67A2 2 0 0 1 4.11 2h3a2 2 0 0 1 2 1.72 12.84 12.84 0 0 0 .7 2.81 2 2 0 0 1-.45 2.11L8.09 9.91a16 16 0 0 0 6 6l1.27-1.27a2 2 0 0 1 2.11-.45 12.84 12.84 0 0 0 2.81.7A2 2 0 0 1 22 16.92z"/></svg>
<svg class="i" style="left:0;top:0;width:1px;height:1px"><text x="451.00" y="1093.00" font-size="16.2" font-weight="400" fill="#64748b" text-anchor="start" style="">555-0123</text></svg>
<svg class="i" style="left:0;top:0;width:1px;height:1px"><text x="424.00" y="1124.40" font-size="16.3" font-weight="400" fill="#64748b" text-anchor="start" style=""><tspan style="fill:#475569">Reason:</tspan> Filling</text></svg>
<svg class="i" style="left:0;top:0;width:1px;height:1px"><text x="424.00" y="1152.00" font-size="14.1" font-weight="400" fill="#64748b" text-anchor="start" style="">with Dr. John Doe</text></svg>
<svg class="i" style="left:0;top:0;width:1px;height:1px"><text x="1014.50" y="934.40" font-size="19.3" font-weight="700" fill="#0f172a" text-anchor="start" style="">Upcoming Appointments</text></svg>
<svg class="i" style="left:0;top:0;width:1px;height:1px"><text x="1014.50" y="954.20" font-size="16.1" font-weight="400" fill="#64748b" text-anchor="start" style="">Next 7 days</text></svg>
<div class="b" style="left:1411.40px;top:920.20px;width:129.50px;height:43.60px;background:#ffffff;border:1.3px solid #e2e8f0;border-radius:22px;"></div>
<svg class="i" style="left:0;top:0;width:1px;height:1px"><text x="1429.00" y="946.75" font-size="14.3" font-weight="400" fill="#1e293b" text-anchor="start" style="stroke:#1e293b;stroke-width:0.3px;">View Calendar</text></svg>
<div class="b" style="left:1014.90px;top:991.20px;width:525.80px;height:106.20px;background:#ffffff;border:1.3px solid #e2e8f0;border-radius:10px;"></div>
<svg class="i" style="left:0;top:0;width:1px;height:1px"><text x="1028.50" y="1026.90" font-size="18.4" font-weight="400" fill="#334155" text-anchor="start" style="stroke:#334155;stroke-width:0.3px;">Emma Brown</text></svg>
<svg class="i" style="left:0;top:0;width:1px;height:1px"><text x="1028.50" y="1055.30" font-size="17.05" font-weight="400" fill="#64748b" text-anchor="start" style="">Fri, Oct 03 • 8:00 AM</text></svg>
<svg class="i" style="left:0;top:0;width:1px;height:1px"><text x="1028.50" y="1078.70" font-size="13.9" font-weight="400" fill="#64748b" text-anchor="start" style="">Dr. John Doe</text></svg>
<div class="b" style="left:1433.70px;top:1032.30px;width:92.60px;height:24.00px;background:#ffffff;border:1.3px solid #e2e8f0;border-radius:7px;"></div>
<svg class="i" style="left:0;top:0;width:1px;height:1px"><text x="1446.00" y="1048.90" font-size="13.4" font-weight="700" fill="#0f172a" text-anchor="start" style="">Scheduled</text></svg>
<div class="b" style="left:1014.90px;top:1111.40px;width:525.80px;height:106.20px;background:#ffffff;border:1.3px solid #e2e8f0;border-radius:10px;"></div>
<svg class="i" style="left:0;top:0;width:1px;height:1px"><text x="1028.50" y="1147.10" font-size="19.0" font-weight="400" fill="#334155" text-anchor="start" style="stroke:#334155;stroke-width:0.3px;">Michael Williams</text></svg>
<svg class="i" style="left:0;top:0;width:1px;height:1px"><text x="1028.50" y="1175.50" font-size="17.05" font-weight="400" fill="#64748b" text-anchor="start" style="">Fri, Oct 03 • 9:00 AM</text></svg>
<svg class="i" style="left:0;top:0;width:1px;height:1px"><text x="1028.50" y="1198.90" font-size="13.9" font-weight="400" fill="#64748b" text-anchor="start" style="">Dr. John Doe</text></svg>
<div class="b" style="left:1433.70px;top:1152.50px;width:92.60px;height:24.00px;background:#ffffff;border:1.3px solid #e2e8f0;border-radius:7px;"></div>
<svg class="i" style="left:0;top:0;width:1px;height:1px"><text x="1446.00" y="1169.10" font-size="13.4" font-weight="700" fill="#0f172a" text-anchor="start" style="">Scheduled</text></svg>
<div class="b" style="left:1535.50px;top:1206.80px;width:44.80px;height:44.80px;background:#ffffff;border-radius:50%;box-shadow:0 2px 10px rgba(0,0,0,0.12);"></div>
<div class="b" style="left:1537.00px;top:1208.30px;width:41.80px;height:41.80px;background:#2e2e2e;border:1px solid #0d0d0d;border-radius:50%;box-shadow:inset 0 0 0 1px #505050;"></div>
<svg class="i" style="left:1549px;top:1220px;width:18px;height:18px" viewBox="0 0 18 18"><defs><linearGradient id="ng" gradientUnits="userSpaceOnUse" x1="0" y1="2.3" x2="0" y2="14"><stop offset="0" stop-color="#fff"/><stop offset="0.85" stop-color="#fff" stop-opacity="0"/></linearGradient></defs><path d="M3.2 2.3V15.3" stroke="#fff" stroke-width="2.3"/><path d="M3.6 2.6L14.5 15.6" stroke="#fff" stroke-width="2"/><path d="M14.4 2.3V14" stroke="url(#ng)" stroke-width="2.2"/></svg>
<div class="b" style="left:1591.00px;top:89.00px;width:9.00px;height:741.00px;background:#cfd3da;border-radius:5px;"></div>
</body></html>
